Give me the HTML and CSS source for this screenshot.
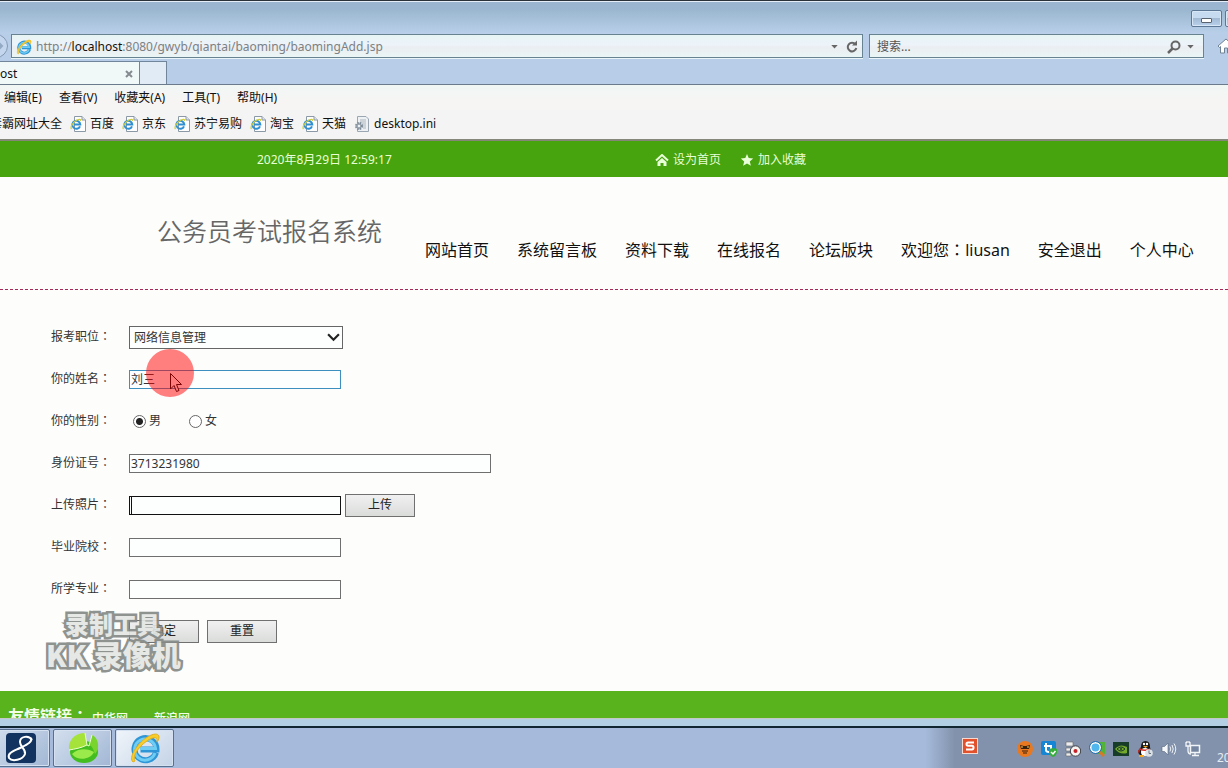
FILE: index.html
```html
<!DOCTYPE html>
<html lang="zh-CN">
<head>
<meta charset="utf-8">
<title>公务员考试报名系统</title>
<link rel="stylesheet" href="styles.css">
</head>
<body>
<svg class="defs" aria-hidden="true">
  <symbol id="ie" viewBox="0 0 32 32">
    <path d="M27 20.500A11 11 0 1 1 27.500 17.500H11.500" fill="none" stroke="#2e95d6" stroke-width="6"/>
    <path d="M26 21A10.500 10.500 0 1 1 26.500 16.500H11" fill="none" stroke="#6fcdf4" stroke-width="3"/>
    <path d="M4 30C-1 26 8 12 17 6C24 1 30 1 30 5C30 7 29 9 28 10C29 5 25 4 18 9C9 15 3 25 6 29Z" fill="#f7cd2c" stroke="#e0b022" stroke-width="1"/>
  </symbol>
  <symbol id="doc" viewBox="0 0 16 16">
    <path d="M4.500 .5H12L15.500 4V15.500H4.500Z" fill="#fdfdfd" stroke="#8b98a6"/>
    <path d="M12 .5V4H15.500" fill="#dfe5ea" stroke="#8b98a6"/>
    <path d="M10 10.300A4 4 0 1 1 10.300 8.500H4" fill="none" stroke="#2f8fd0" stroke-width="2"/>
    <path d="M1.500 13C0 11 3 6 7 4C9 3 11 3 10.500 5" fill="none" stroke="#d3cf3c" stroke-width="1.300"/>
  </symbol>
</svg>

<div class="titlebar">
  <button class="winbtn" aria-label="最小化"><span class="minimize"></span></button>
  <button class="winbtn" aria-label="最大化"></button>
</div>

<div class="navrow">
  <button class="forward" aria-label="前进"><svg viewBox="0 0 10 10"><path d="M1 5H8M5 2L8 5L5 8"/></svg></button>
  <div class="address">
    <svg class="i16"><use href="#ie"/></svg>
    <span class="url">http://<b>localhost</b>:8080/gwyb/qiantai/baoming/baomingAdd.jsp</span>
    <svg class="tri" viewBox="0 0 8 5"><path d="M0 0H8L4 4.500Z"/></svg>
    <svg class="reload" viewBox="0 0 12 14"><path d="M9.500 4.500A4.300 4.300 0 1 0 10.300 8" fill="none" stroke="#666" stroke-width="2"/><path d="M6 5.500H11V.5Z" fill="#666"/></svg>
  </div>
  <div class="search">
    <input type="text" placeholder="搜索..." aria-label="搜索">
    <svg class="lens" viewBox="0 0 14 14"><circle cx="8.500" cy="5.500" r="4" fill="none" stroke="#666" stroke-width="2"/><path d="M5.500 8.500L1 13" stroke="#666" stroke-width="2.500"/></svg>
    <svg class="tri" viewBox="0 0 8 5"><path d="M0 0H8L4 4.500Z"/></svg>
  </div>
  <svg class="home" viewBox="0 0 18 16"><path d="M1 8L9 1L17 8L15.500 9.500L14.500 8.500V15H10.500V10H7.500V15H3.500V8.500L2.500 9.500Z" fill="#fff" stroke="#6f8194"/></svg>
</div>

<div class="tabs">
  <div class="tab"><span>ost</span><button class="close" aria-label="关闭"><svg viewBox="0 0 8 8"><path d="M1 1L7 7M7 1L1 7"/></svg></button></div>
  <button class="newtab" aria-label="新建选项卡"></button>
</div>

<nav class="menu">
  <a href="#">编辑(E)</a><a href="#">查看(V)</a><a href="#">收藏夹(A)</a><a href="#">工具(T)</a><a href="#">帮助(H)</a>
</nav>
<nav class="favorites">
  <a href="#">毒霸网址大全</a>
  <a href="#"><svg class="i16"><use href="#doc"/></svg>百度</a>
  <a href="#"><svg class="i16"><use href="#doc"/></svg>京东</a>
  <a href="#"><svg class="i16"><use href="#doc"/></svg>苏宁易购</a>
  <a href="#"><svg class="i16"><use href="#doc"/></svg>淘宝</a>
  <a href="#"><svg class="i16"><use href="#doc"/></svg>天猫</a>
  <a href="#"><svg class="i16" viewBox="0 0 16 16"><path d="M3.500 .5H12L14.500 3V15.500H3.500Z" fill="#eef1f3" stroke="#9aa7b2"/><path d="M6 4H12M6 6H12M8 8H12M9 10H12M9 12H12" stroke="#a9b5bf"/><circle cx="5" cy="10" r="3" fill="#eef1f3" stroke="#7d8c9a" stroke-width="2" stroke-dasharray="1.600 .8"/><circle cx="5" cy="10" r="2" fill="none" stroke="#7d8c9a"/></svg>desktop.ini</a>
</nav>

<main class="page">
  <div class="topbar">
    <span class="date">2020年8月29日 12:59:17</span>
    <a href="#"><svg viewBox="0 0 14 12"><path d="M1 6.500L7 1L13 6.500" fill="none" stroke="#e8ffd8" stroke-width="2"/><path d="M7 4L11.500 8V12H8.500V9H5.500V12H2.500V8Z" fill="#e8ffd8"/></svg>设为首页</a>
    <a href="#"><svg viewBox="0 0 14 12"><path d="M7 0L8.700 4.100L13.200 4.500L9.800 7.400L10.900 11.800L7 9.500L3.100 11.800L4.200 7.400L.8 4.500L5.300 4.100Z" fill="#e8ffd8"/></svg>加入收藏</a>
  </div>
  <header class="header">
    <h1>公务员考试报名系统</h1>
    <nav class="sitenav">
      <a href="#">网站首页</a><a href="#">系统留言板</a><a href="#">资料下载</a><a href="#">在线报名</a><a href="#">论坛版块</a><a href="#">欢迎您<span class="colon" lang="zh-TW">：</span>liusan</a><a href="#">安全退出</a><a href="#">个人中心</a>
    </nav>
  </header>

  <form class="form">
    <div class="row"><label for="job">报考职位<span class="colon" lang="zh-TW">：</span></label>
      <div class="selectbox"><select id="job"><option>网络信息管理</option></select><svg viewBox="0 0 12 8"><path d="M1 1L6 6L11 1"/></svg></div></div>
    <div class="row"><label for="name">你的姓名<span class="colon" lang="zh-TW">：</span></label><input class="text hover" id="name" type="text" value="刘三"></div>
    <div class="row"><span class="label">你的性别<span class="colon" lang="zh-TW">：</span></span>
      <label class="radio"><input type="radio" name="sex" checked>男</label>
      <label class="radio"><input type="radio" name="sex">女</label></div>
    <div class="row"><label for="idno">身份证号<span class="colon" lang="zh-TW">：</span></label><input class="text wide" id="idno" type="text" value="3713231980"></div>
    <div class="row"><label for="photo">上传照片<span class="colon" lang="zh-TW">：</span></label><div class="caretbox"><input class="text active" id="photo" type="text"></div><button class="btn upload" type="button">上传</button></div>
    <div class="row"><label for="school">毕业院校<span class="colon" lang="zh-TW">：</span></label><input class="text" id="school" type="text"></div>
    <div class="row"><label for="major">所学专业<span class="colon" lang="zh-TW">：</span></label><input class="text" id="major" type="text"></div>
    <div class="row actions"><button class="btn" type="button">确定</button><button class="btn" type="reset">重置</button></div>
  </form>

  <footer class="footer"><strong>友情链接<span class="colon" lang="zh-TW">：</span></strong><a href="#">中华网</a><a href="#">新浪网</a></footer>

  <div class="watermark"><span>录制工具</span><span class="big">KK 录像机</span></div>
  <div class="pointer"><svg viewBox="0 0 12 20"><path d="M.5 .5V16L4 12.500L6.500 18.500L9 17.500L6.500 11.500H11.500Z" fill="#ff7c7c" stroke="#7c0505"/></svg></div>
</main>

<div class="taskbar">
  <button class="task" aria-label="8"><svg viewBox="0 0 32 32"><rect x="1" y="1" width="30" height="30" rx="4" fill="#12325f"/><path d="M27 8C24 3 15 4 15 10C15 15 21 17 20 22C18 28 7 30 4 26C2 21 9 19 15 16C21 13 28 10 26 6" fill="none" stroke="#fff" stroke-width="2"/></svg></button>
  <button class="task" aria-label="浏览"><svg viewBox="0 0 32 32"><ellipse cx="17" cy="20" rx="14" ry="11" fill="#43bd1f"/><path d="M2 18C1 8 8 1 18 1L20 13C15 16 8 17 2 18Z" fill="#a5e33b"/><path d="M22 13L25 3C32 6 33 17 28 22C26 16 25 14 22 13Z" fill="#79d42d"/><path d="M5 22C12 15 22 17 27 20C24 27 11 30 5 22Z" fill="#9bea4c"/><path d="M2 18C8 17 14 16 20 13L18 1M20 13L22 14L25 3" fill="none" stroke="#eaffc8"/></svg></button>
  <button class="task current" aria-label="Internet Explorer"><svg><use href="#ie"/></svg></button>
  <div class="tray">
    <svg class="sogou" viewBox="0 0 16 16"><rect x=".5" y=".5" width="15" height="15" fill="#e2502c" stroke="#f7d9cf"/><path d="M12 4.500H6Q4.500 4.500 4.500 6Q4.500 7.800 6 7.800H10Q11.500 7.800 11.500 9.500Q11.500 11.500 10 11.500H4" fill="none" stroke="#fff" stroke-width="2"/></svg>
    <svg viewBox="0 0 16 16"><circle cx="8" cy="8" r="8" fill="#e87920"/><path d="M3 4L7 5H9L13 4L12 8H4Z" fill="#38200c"/><path d="M5 10H11M6 12H10" stroke="#38200c" stroke-width="1.200"/><path d="M4 6H6M10 6H12" stroke="#ffd060"/></svg>
    <svg viewBox="0 0 16 16"><rect width="15" height="14" rx="2" fill="#1685d3"/><path d="M3 5H11M5 2V9Q5 11 8 11M10 5V9" fill="none" stroke="#fff" stroke-width="2"/><path d="M8 8L12 7L16 8V12Q15 15 12 16Q9 15 8 12Z" fill="#36ad3d"/><path d="M10 11L12 13L14.500 10" fill="none" stroke="#fff" stroke-width="1.500"/></svg>
    <svg viewBox="0 0 16 16"><path d="M1 1H8V5H1ZM1 7H7V10H1ZM1 12H6V15H1Z" fill="#eceef1" stroke="#666" stroke-width=".6"/><circle cx="10.500" cy="10" r="5.200" fill="#f7f5f2" stroke="#3d4047"/><circle cx="10.500" cy="10" r="2" fill="#c62026"/></svg>
    <svg viewBox="0 0 16 16"><path d="M9 1H16V13H8Z" fill="#52b33b"/><path d="M10 10L15 15" stroke="#d57b25" stroke-width="3"/><circle cx="6.500" cy="6.500" r="4.800" fill="#4fb6ee" stroke="#fff" stroke-width="1.500"/><circle cx="6.500" cy="6.500" r="6" fill="none" stroke="#2370b3"/></svg>
    <svg viewBox="0 0 16 16"><rect y="1" width="16" height="14" fill="#173c28"/><path d="M2 8Q7 2 14 6V12Q7 14 2 8Z" fill="#75a92b"/><path d="M4 8Q8 4 12 8Q8 12 4 8Z" fill="none" stroke="#173c28"/><circle cx="8" cy="8" r="1" fill="#173c28"/></svg>
    <svg viewBox="0 0 16 16"><path d="M4 6Q4 0 8.500 0Q13 0 13 6L14 11Q13 15 8 15Q1 15 1 10Z" fill="#151515"/><ellipse cx="8" cy="11" rx="4" ry="4" fill="#fff"/><path d="M3 7Q8 10 13 7V9Q8 11 3 9L2 13L1 10Z" fill="#d52b24"/><circle cx="7" cy="3" r="1.200" fill="#fff"/><circle cx="10" cy="3" r="1.200" fill="#fff"/><path d="M6 5H11L8.500 7Z" fill="#f3a522"/><path d="M2 15H7" stroke="#f3a522" stroke-width="2"/><circle cx="12" cy="12" r="3.800" fill="#dce1e6"/><path d="M12 9.500V12.500H14" fill="none" stroke="#68737e"/></svg>
    <svg viewBox="0 0 16 16"><path d="M1 5.500H3.500L7 2V14L3.500 10.500H1Z" fill="#f5f7fa" stroke="#56647a" stroke-width=".6"/><path d="M9 5.500Q10.500 8 9 10.500M11 4Q13.500 8 11 12M13 2.500Q16.500 8 13 13.500" fill="none" stroke="#edf1f6"/></svg>
    <svg viewBox="0 0 16 16"><path d="M5.500 4.500H14.500V11.500H5.500Z" fill="#7485a1" stroke="#f2f5f8" stroke-width="1.500"/><path d="M7 14.500H14M10 12V14M1 1V5H5V1M3 5V10Q3 13 6 13M2 0V2M4 0V2" fill="none" stroke="#f2f5f8" stroke-width="1.300"/></svg>
    <time>20</time>
  </div>
</div>
</body>
</html>
```
FILE: styles.css
```css
* { box-sizing: border-box; }
body {
  margin: 0;
  height: 100vh;
  display: flex;
  flex-direction: column;
  overflow: hidden;
  background: #fdfefc;
  color: #111;
  font: 12px/16px "Noto Sans", "Noto Sans CJK SC", sans-serif;
}
a { color: inherit; text-decoration: none; white-space: nowrap; }
button, input, select { font: inherit; color: inherit; }
svg { display: block; flex: none; }
.defs { position: absolute; width: 0; height: 0; }
.i16 { width: 16px; height: 16px; }
.colon { font-family: "Noto Sans CJK TC", sans-serif; line-height: 1; }

/* browser frame */
.titlebar {
  flex: none;
  height: 34px;
  display: flex;
  justify-content: flex-end;
  gap: 3px;
  padding-top: 9px;
  overflow: hidden;
  border-top: 1px solid #2b3138;
  box-shadow: inset 0 1px #e5eef8;
  background: linear-gradient(#9bb3cf, #9ab6cf 25%, #bad0ea);
}
.winbtn {
  flex: none;
  width: 31px;
  height: 17px;
  padding: 0;
  display: grid;
  place-items: center;
  border: 1px solid #5d7796;
  border-radius: 2px;
  background: linear-gradient(#c6daf0 45%, #a3bad5 50%, #b9d1ec);
  box-shadow: inset 0 0 0 1px #d8e7f6;
}
.winbtn:last-child { margin-right: -28px; }
.minimize { width: 11px; height: 5px; margin-top: 4px; border: 1px solid #59636e; border-radius: 1px; background: #fff; }
.navrow { flex: none; height: 27px; display: flex; align-items: flex-start; background: #b8cde7; overflow: hidden; }
.forward {
  flex: none;
  width: 24px;
  height: 24px;
  margin: 0 3px 0 -16px;
  padding: 0 3px 0 0;
  display: grid;
  place-items: center end;
  border: 1px solid #8299b5;
  border-radius: 50%;
  background: #c3d6ed;
}
.forward svg { width: 10px; height: 10px; fill: none; stroke: #93a9c4; stroke-width: 2; }
.address, .search {
  height: 24px;
  display: flex;
  align-items: center;
  border: 1px solid #678392;
  background: linear-gradient(#e7f4f3, #edf3fa 45%, #ebeef2 55%, #eaf5f4);
  box-shadow: 0 1px #e9f5f8;
}
.address { flex: 1; padding: 1px 4px 0 4px; }
.url { flex: 1; margin-left: 4px; color: #7b8184; font-size: 12px; }
.url b { color: #111; font-weight: 400; }
.tri { width: 7px; height: 4px; fill: #666; }
.reload { width: 12px; height: 14px; margin-left: 8px; }
.search { flex: 0 0 335px; margin-left: 6px; padding: 1px 9px 0 7px; }
.search input { flex: 1; min-width: 0; padding: 0; border: 0; outline: 0; background: none; }
.search input::placeholder { color: #555; }
.lens { width: 14px; height: 14px; margin-right: 6px; }
.home { width: 18px; height: 16px; margin: 4px -7px 0 13px; }
.tabs { flex: none; height: 24px; display: flex; background: #b8cde7; border-bottom: 1px solid #6c7b8c; }
.tab { width: 140px; display: flex; align-items: center; justify-content: space-between; padding: 2px 6px 0 0; border: 1px solid #71869b; border-width: 1px 1px 0 0; background: #f1f9f8; }
.close { padding: 0; border: 0; background: none; }
.close svg { width: 8px; height: 8px; fill: none; stroke: #858b90; stroke-width: 2; }
.newtab { width: 27px; padding: 0; border: 1px solid #71869b; border-width: 1px 1px 0 0; background: #e1ebf6; }
.menu { flex: none; height: 25px; display: flex; align-items: center; gap: 17px; padding-left: 4px; background: linear-gradient(#f0f7f4, #f6f5f4 60%); }
.favorites { flex: none; height: 31px; display: flex; align-items: center; gap: 8px; padding-bottom: 2px; background: #f4f4f4; border-bottom: 2px solid #85877a; overflow: hidden; }
.favorites a { display: flex; align-items: center; gap: 4px; }
.favorites a:first-child { margin-left: -10px; }

/* web page */
.page { flex: 1; min-height: 0; position: relative; overflow: hidden; color: #333; }
.topbar { height: 36px; display: flex; align-items: center; padding: 2px 0 0 257px; background: #47a30e; color: #e8ffd8; }
.topbar a { display: flex; align-items: center; gap: 4px; margin-right: 19px; }
.topbar svg { width: 14px; height: 12px; }
.date { flex: 0 0 398px; }
.header { height: 113px; display: flex; padding-left: 157px; border-bottom: 1px dashed #a8285a; }
.header h1 { flex: none; margin: 34px 43px 0 0; color: #666; font-size: 25px; line-height: 38px; font-weight: 400; font-family: "Noto Sans CJK SC", sans-serif; font-weight: 350; }
.sitenav { display: flex; gap: 28px; padding-top: 61px; color: #111; font-size: 16px; line-height: 24px; }
.form { padding: 26px 0 39px 51px; }
.row { height: 42px; display: flex; align-items: center; }
.row > label:first-child, .label { flex: 0 0 78px; }
.text { width: 212px; height: 19px; padding: 0 1px; border: 1px solid #6f6f6f; border-radius: 0; background: #fdfefe; outline: 0; }
.text.wide { width: 362px; }
.text.hover { border-color: #3d8fc0; }
.text.active { border-color: #111; }
.caretbox { position: relative; display: flex; }
.caretbox::after { content: ""; position: absolute; left: 2px; top: 1px; width: 1px; height: 17px; background: #111; }
.selectbox { position: relative; width: 214px; height: 23px; }
.selectbox select { width: 100%; height: 100%; padding: 1px 4px 0; appearance: none; border: 1px solid #666; border-radius: 0; background: #fdfefe; }
.selectbox svg { position: absolute; right: 3px; top: 7px; width: 13px; height: 9px; fill: none; stroke: #222; stroke-width: 2; pointer-events: none; }
.label + .radio { margin-left: 4px; }
.radio { display: flex; align-items: center; gap: 3px; width: 56px; }
.radio input { appearance: none; flex: none; width: 13px; height: 13px; margin: 0; border: 1px solid #666; border-radius: 50%; background: #fff; }
.radio input:checked { background: radial-gradient(#222 3px, #fff 4px); }
.btn { width: 70px; height: 23px; padding: 0; border: 1px solid #707070; border-radius: 0; background: linear-gradient(#f0f0f0, #dadcda); color: #222; }
.upload { margin-left: 4px; }
.actions { gap: 8px; padding-left: 78px; }
.footer { height: 90px; display: flex; align-items: flex-start; padding: 13px 8px; background: #59b31d; color: #f4ffe8; }
.footer strong { width: 84px; font-size: 16px; line-height: 24px; }
.footer a { width: 62px; line-height: 30px; font-weight: 500; }

/* recorder overlay */
.watermark {
  position: absolute;
  left: 46px;
  top: 468px;
  display: flex;
  flex-direction: column;
  color: #e4e7e4;
  font: 900 24px/30px "Noto Sans CJK SC", sans-serif;
  -webkit-text-stroke: 5px #858a87;
  paint-order: stroke fill;
  opacity: .92;
  white-space: nowrap;
  pointer-events: none;
}
.watermark span { padding-left: 19px; }
.watermark .big { padding-left: 0; font-size: 29px; }
.pointer { position: absolute; left: 146px; top: 208px; width: 48px; height: 48px; border-radius: 50%; background: rgba(255, 0, 0, .5); pointer-events: none; }
.pointer svg { width: 12px; height: 20px; margin: 24px 0 0 24px; }

/* desktop taskbar */
.taskbar {
  flex: none;
  height: 50px;
  display: flex;
  gap: 3px;
  padding-top: 11px;
  overflow: hidden;
  background: linear-gradient(#c5c9c4 1px, #b3cfe3 1px, #b3cfe3 8px, #102631 8px, #102631 10px, transparent 10px), linear-gradient(90deg, #a6bbdb 925px, #8292ac 955px);
}
.task {
  flex: none;
  width: 59px;
  height: 38px;
  padding: 0;
  display: grid;
  place-items: center;
  border: 1px solid #58708f;
  border-radius: 2px;
  background: linear-gradient(135deg, #d3dfee, #a2b7d5);
  box-shadow: inset 0 0 0 1px #d5e1f0;
}
.task:first-child { margin-left: -9px; }
.task.current { background: linear-gradient(135deg, #f0f5fa, #c4d3e7); }
.task svg { width: 32px; height: 32px; }
.tray { display: flex; gap: 8px; margin: 12px 0 0 auto; }
.tray svg { width: 16px; height: 16px; }
.tray .sogou { margin: -3px 31px 0 0; }
.tray time { width: 11px; margin: 9px 0 0 8px; color: #e5edf5; white-space: nowrap; }
```
